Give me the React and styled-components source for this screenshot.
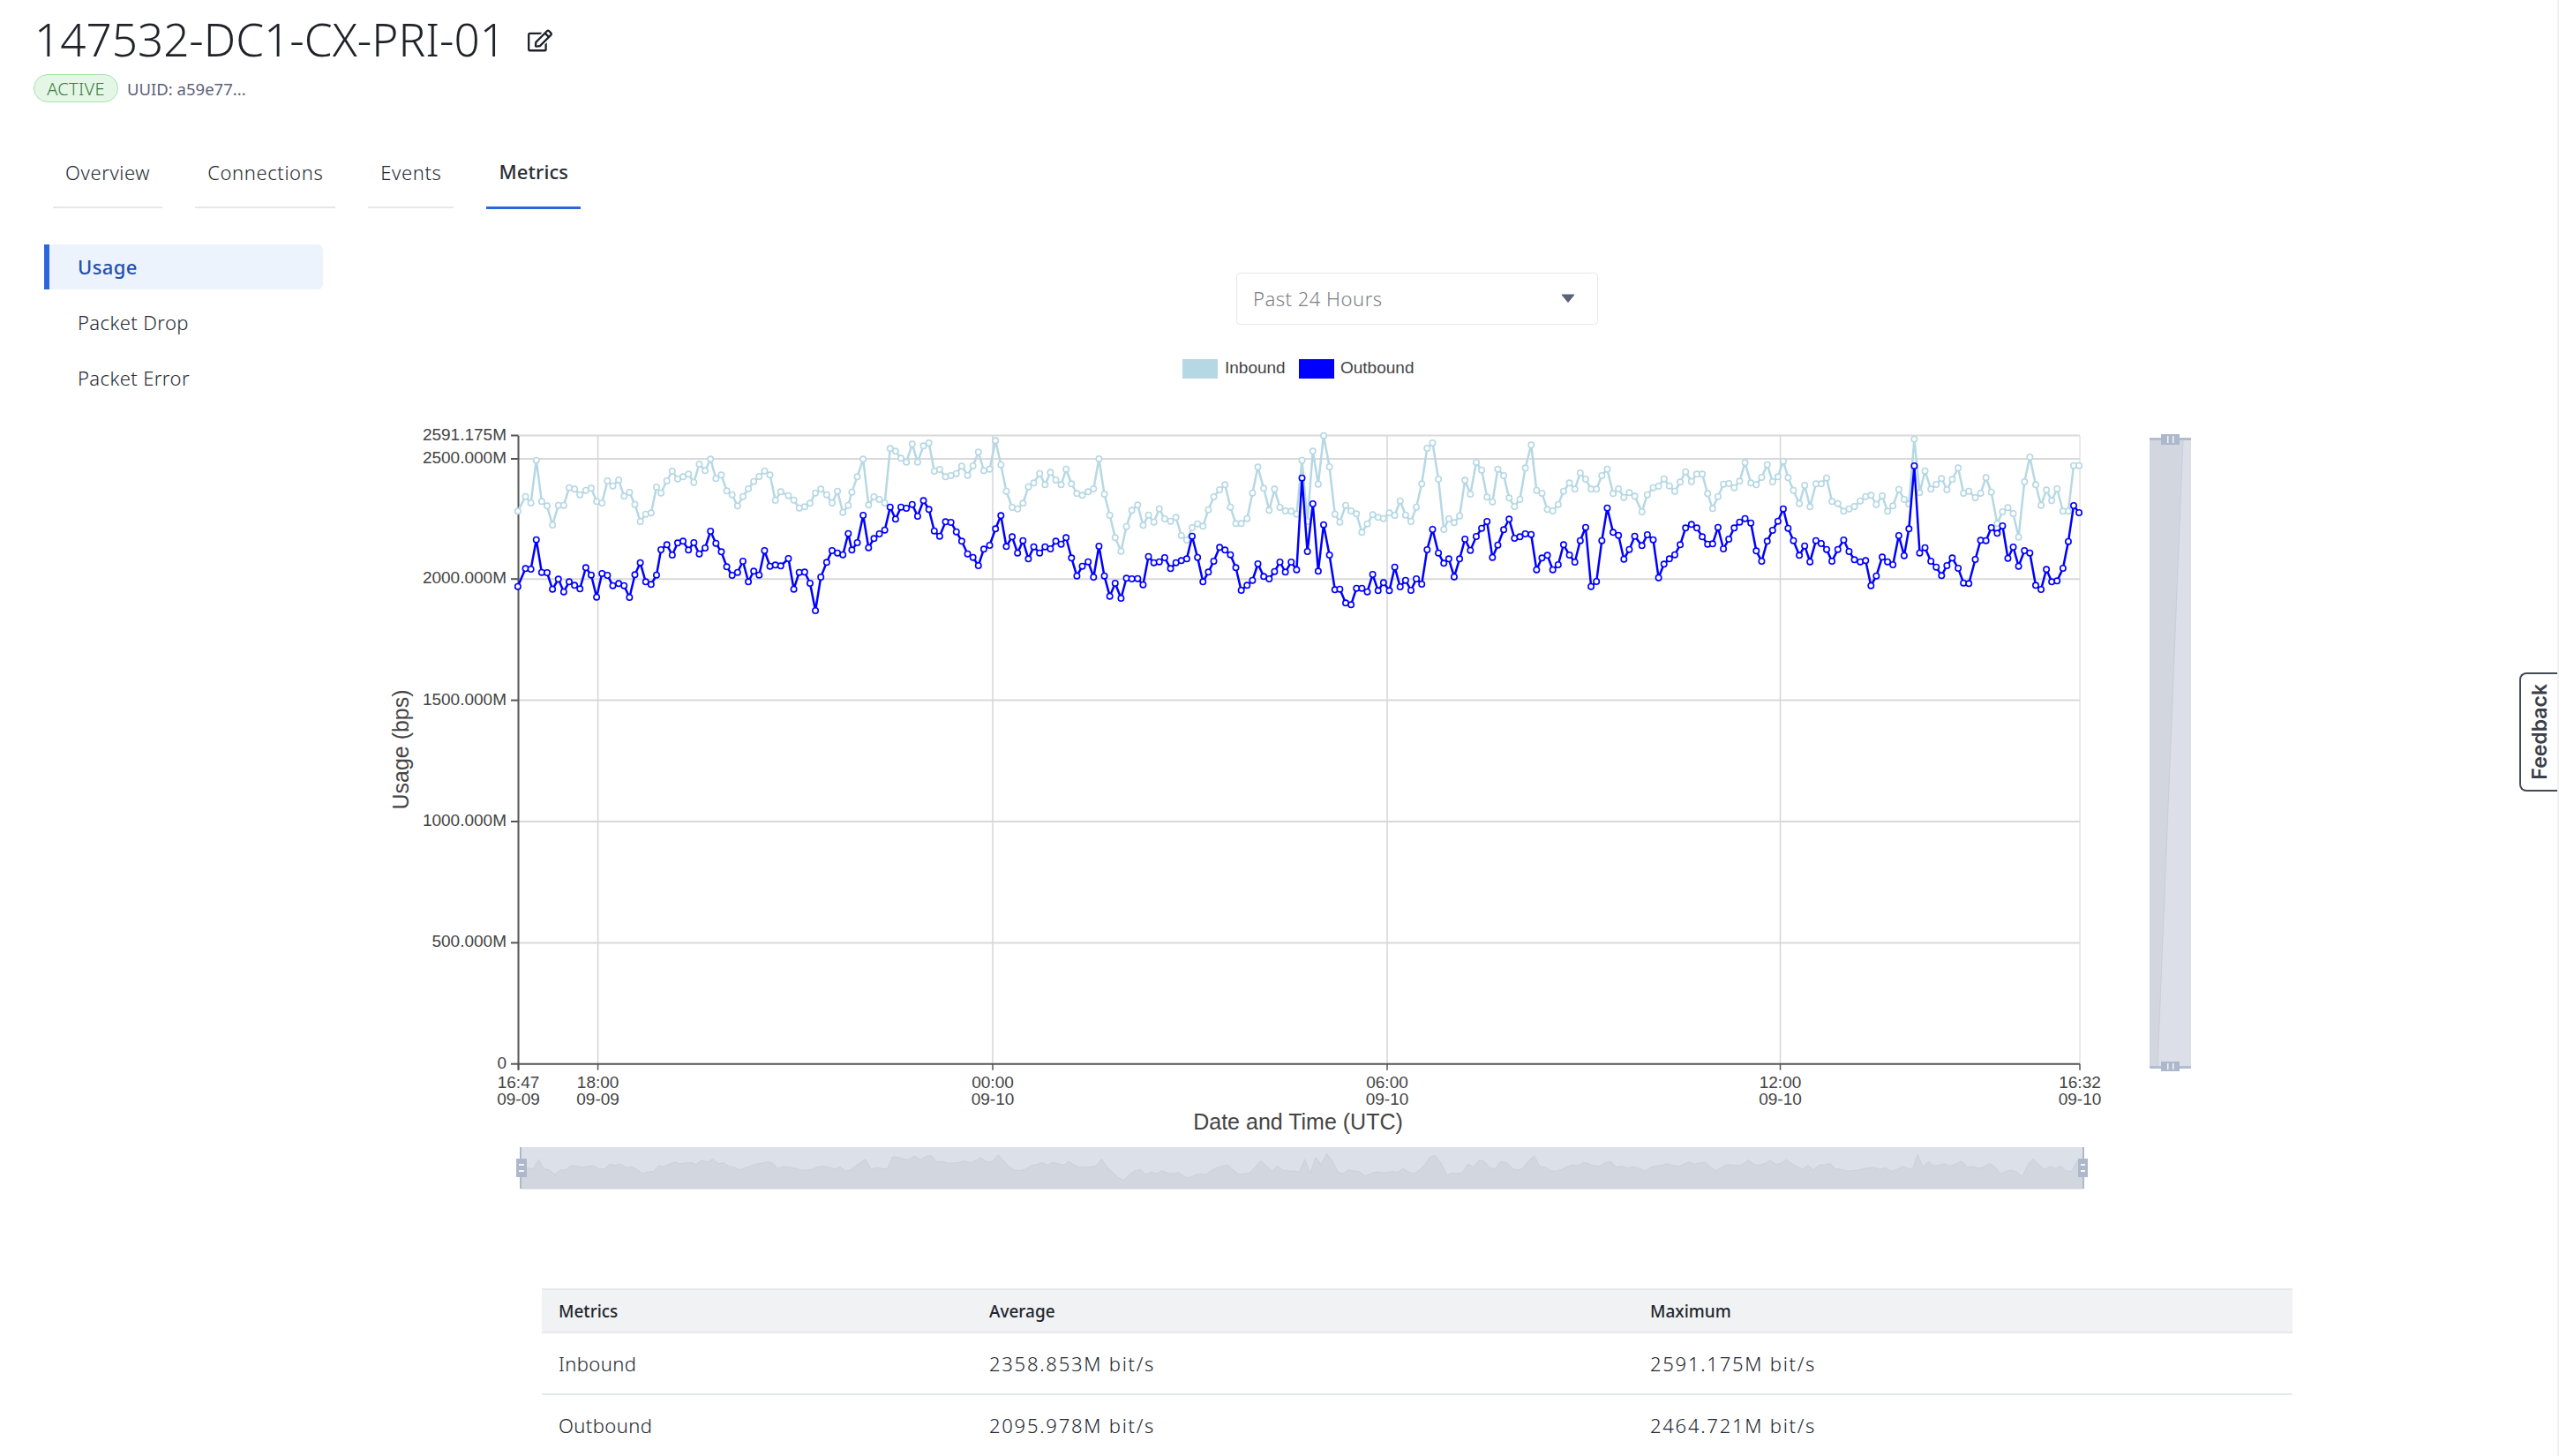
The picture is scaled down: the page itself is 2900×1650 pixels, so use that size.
import React from 'react'
import styled, { createGlobalStyle } from 'styled-components'
import { FaRegEdit } from 'react-icons/fa'

const GlobalStyle = createGlobalStyle`
  html, body {
    margin: 0;
    padding: 0;
    background: #fff;
    height: 1650px;
    overflow: hidden;
  }
  body {
    font-family: "Noto Sans", "Liberation Sans", sans-serif;
    color: #22262e;
  }
`

// traced off the chart, "x:y" pairs per stretch of the time axis
const parse = (x0, sx, y0, s) =>
  s.trim().split(/\s+/).map((p) => {
    const [x, y] = p.split(':').map(Number)
    return [x0 + x / sx, y0 + y / 3]
  })

const inbound = [
  ...parse(420, 1.96, 280, `327:898 344:848 356:870 368:725 380:865 392:880 404:945 417:878 429:878 441:818 453:823 465:842 478:827 490:820 502:865 514:870 526:795 538:812 551:792 563:847 575:834 587:875 599:933 611:908 623:904 635:816 645:836 658:795 670:762 682:788 694:781 706:772 718:800 730:738 743:760 755:721 767:787 779:775 791:829 803:842 815:880 827:848 839:822 851:797 863:780 875:761 887:775 899:861 911:832 928:845 940:860 952:887 964:883 976:871 988:836 1000:823 1013:842 1025:870 1037:830 1049:902 1061:878 1069:833 1081:781 1094:721 1106:877 1118:849 1130:858 1142:870 1154:685 1166:694 1178:718 1190:731 1203:670 1215:731 1228:676 1240:666 1252:762 1264:756 1277:781 1289:777 1301:770 1313:745 1326:776 1338:744 1350:697 1362:760 1375:755 1388:658 1400:740 1412:830 1425:885 1437:890 1449:871 1461:815 1473:802 1486:770 1498:808 1510:766 1522:792`),
  ...parse(1200, 1.96, 280, `5:808 16:755 28:805 40:838 52:844 65:832 77:822 89:720 101:840 113:912 125:988 138:1034 150:950 162:895 175:877 187:946 199:911 211:935 223:890 235:924 248:932 260:919 272:981 284:996 296:954 308:941 320:949 332:893 344:849 357:825 369:808 381:884 393:940 405:940 418:923 430:836 442:748 455:820 467:895 479:823 491:885 503:897 516:898 528:908 540:725 552:933 564:694 576:806 588:641 601:747 613:908 624:935 637:878 649:897 661:907 673:970 685:941 697:910 709:919 721:923 734:904 746:912 758:863 770:911 782:933 794:884 806:805 818:684 830:666 843:789 855:960 866:924 878:937 890:914 902:793 914:840 927:732 939:758 951:850 963:866 975:755 988:777 1000:853 1012:882 1024:858 1036:751 1049:673 1061:827 1073:837 1085:892 1097:897 1109:875 1121:830 1134:802 1146:823 1158:768 1170:789 1182:823 1194:823 1206:777 1218:755 1231:838 1243:822 1255:851 1267:835 1279:847 1295:900 1307:842 1320:818 1332:813 1344:788 1356:812 1368:830 1380:799 1392:764 1405:797 1417:772 1429:772 1441:838 1452:889 1464:848 1476:806 1488:804 1500:818 1512:796 1524:733 1537:802 1549:808 1561:783`),
  ...parse(1950, 1.65, 460, `87:200 97:258 107:241 117:188 126:244 136:287 147:332 157:270 167:343 178:265 188:265 198:245 208:325 219:332 230:358 240:350 250:342 261:323 271:308 281:304 291:335 302:306 312:358 322:340 333:284 343:318 352:334 362:113 372:295 382:221 393:283 403:267 413:247 423:285 433:250 444:211 454:297 464:290 476:312 486:297 496:244 506:293 517:400 527:360 537:346 547:366 557:446 568:258 578:174 589:268 599:338 609:286 619:322 629:282 640:358 650:358 660:203 670:203`),
]

const outbound = [
  ...parse(420, 1.96, 280, `327:1154 344:1093 356:1095 368:995 380:1106 392:1107 404:1163 417:1129 429:1172 441:1138 453:1150 465:1162 478:1090 490:1115 502:1190 514:1110 526:1116 538:1151 551:1144 563:1151 575:1191 587:1114 599:1073 611:1138 623:1147 635:1115 645:1029 658:1012 670:1047 682:1006 694:1000 706:1030 718:1005 730:1043 743:1023 755:966 767:1007 779:1036 791:1087 803:1116 815:1106 827:1068 839:1138 851:1102 863:1115 875:1032 887:1085 899:1081 911:1084 928:1059 940:1163 952:1106 964:1105 976:1143 988:1236 1000:1122 1013:1072 1025:1032 1037:1040 1049:1046 1061:974 1069:1030 1081:1005 1094:912 1106:1022 1118:991 1130:975 1142:962 1154:884 1166:925 1178:884 1190:888 1203:875 1215:915 1228:862 1240:892 1252:965 1264:983 1277:934 1289:936 1301:968 1313:1000 1326:1043 1338:1055 1350:1083 1362:1027 1375:1014 1388:958 1400:913 1412:1018 1425:985 1437:1040 1449:998 1461:1060 1473:1019 1486:1040 1498:1019 1510:1026 1522:1000`),
  ...parse(1200, 1.96, 280, `5:1010 16:988 28:1057 40:1118 52:1085 65:1070 77:1122 89:1017 101:1118 113:1187 125:1143 138:1194 150:1126 162:1128 175:1127 187:1148 199:1052 211:1073 223:1070 235:1056 248:1093 260:1073 272:1066 284:1060 296:983 308:1055 320:1138 332:1105 344:1068 357:1021 369:1030 381:1046 393:1090 405:1167 418:1150 430:1133 442:1077 455:1120 467:1128 479:1103 491:1071 503:1105 516:1071 528:1097 540:785 552:1035 564:873 576:1102 588:944 601:1047 613:1165 624:1163 637:1210 649:1216 661:1160 673:1160 685:1172 697:1113 709:1168 721:1141 734:1168 746:1088 758:1155 770:1133 782:1167 794:1128 806:1146 818:1029 830:960 843:1040 855:1075 866:1060 878:1121 890:1060 902:993 914:1031 927:984 939:956 951:933 963:1055 975:1013 988:961 1000:925 1012:990 1024:985 1036:975 1049:977 1061:1097 1073:1057 1085:1048 1097:1097 1109:1080 1121:1012 1134:1047 1146:1071 1158:998 1170:953 1182:1154 1194:1137 1206:998 1218:887 1231:970 1243:980 1255:1061 1267:1028 1279:983 1295:1015 1307:978 1320:995 1332:1124 1344:1078 1356:1060 1368:1046 1380:1012 1392:955 1405:943 1417:955 1429:985 1441:1010 1452:1009 1464:953 1476:1026 1488:993 1500:955 1512:935 1524:923 1537:938 1549:1033 1561:1068`),
  ...parse(1950, 1.65, 460, `87:460 97:423 107:392 117:350 126:416 136:458 147:508 157:476 167:530 178:458 188:468 198:488 208:528 219:488 230:456 240:495 250:523 261:530 271:526 281:611 291:578 302:514 312:530 322:540 333:441 343:509 352:418 362:204 372:500 382:482 393:528 403:548 413:577 423:543 433:517 444:552 454:602 464:604 476:522 486:457 496:458 506:414 517:433 527:408 537:518 547:480 557:545 568:492 578:500 589:610 599:624 609:556 619:598 629:595 640:552 650:461 660:339 670:363`),
]

const PLOT = { left: 587.5, right: 2357, top: 494, bottom: 1205.7 }

const yTicks = [
  { y: 493.5, label: '2591.175M' },
  { y: 520, label: '2500.000M' },
  { y: 656.2, label: '2000.000M' },
  { y: 793.6, label: '1500.000M' },
  { y: 931, label: '1000.000M' },
  { y: 1068.4, label: '500.000M' },
  { y: 1205.7, label: '0' },
]

const xTicks = [
  { x: 587.5, time: '16:47', date: '09-09' },
  { x: 677.6, time: '18:00', date: '09-09' },
  { x: 1125, time: '00:00', date: '09-10' },
  { x: 1572, time: '06:00', date: '09-10' },
  { x: 2017.5, time: '12:00', date: '09-10' },
  { x: 2357, time: '16:32', date: '09-10' },
]

const toPath = (pts) => pts.map(([x, y]) => `${x.toFixed(1)},${y.toFixed(1)}`).join(' ')

// overview strip under the chart follows the inbound series
const overview = () => {
  const line = inbound.map(([x, y]) => [
    590 + ((x - PLOT.left) * 1771) / (PLOT.right - PLOT.left),
    1314 + (y - 522) * 0.23,
  ])
  return [[590, 1347], ...line, [2361, 1347]]
}

const Page = styled.div`
  width: 2898px;
  min-height: 1650px;
  border-right: 2px solid #f1f1f1;
  position: relative;
  overflow: hidden;
`

const Header = styled.header`
  padding: 10px 0 0 39px;
`

const TitleRow = styled.div`
  display: flex;
  align-items: center;
  gap: 25px;
`

const Title = styled.h1`
  margin: 0;
  font-size: 51.2px;
  line-height: 68px;
  font-weight: 350;
  color: #1f2329;
`

const EditIcon = styled(FaRegEdit)`
  font-size: 28px;
  color: #1f2329;
  margin-top: 4px;
`

const StatusRow = styled.div`
  display: flex;
  align-items: center;
  gap: 10px;
  margin: 6px 0 0 -1px;
`

const Badge = styled.span`
  box-sizing: border-box;
  width: 96px;
  height: 32px;
  display: flex;
  align-items: center;
  justify-content: center;
  border: 1.5px solid #a9e3ad;
  border-radius: 16px;
  background: #e4f7e6;
  color: #3c7a42;
  font-size: 20px;
  font-weight: 350;
  letter-spacing: 0.3px;
`

const Uuid = styled.span`
  font-size: 18.5px;
  color: #5b6179;
`

const Tabs = styled.nav`
  display: flex;
  gap: 37px;
  margin: 64px 0 0 60px;
`

const Tab = styled.div`
  padding: 0 14px 24px;
  height: 30px;
  line-height: 30px;
  font-size: 22px;
  letter-spacing: ${(p) => (p.$active ? '0.1px' : '0.6px')};
  font-weight: ${(p) => (p.$active ? 500 : 350)};
  color: ${(p) => (p.$active ? '#2a2e36' : '#262a32')};
  border-bottom: ${(p) => (p.$active ? '3px solid #2b66dd' : '2px solid #e6e7ea')};
  margin-bottom: ${(p) => (p.$active ? '0' : '1px')};
  margin-top: ${(p) => (p.$active ? '-1px' : '0')};
  padding-bottom: ${(p) => (p.$active ? '25px' : '24px')};
`

const Body = styled.div`
  display: flex;
  margin: 40px 0 0 50px;
`

const SideNav = styled.aside`
  width: 316px;
  margin-right: 54px;
  flex: none;
  display: flex;
  flex-direction: column;
  gap: 12px;
`

const SideItem = styled.div`
  box-sizing: border-box;
  height: 51px;
  line-height: 51px;
  padding-left: ${(p) => (p.$active ? '32px' : '38px')};
  font-size: 22px;
  letter-spacing: 0.4px;
  color: ${(p) => (p.$active ? '#2351ac' : '#262a32')};
  font-weight: ${(p) => (p.$active ? 500 : 350)};
  background: ${(p) => (p.$active ? '#edf3fd' : 'transparent')};
  border-left: ${(p) => (p.$active ? '6px solid #2b66dd' : 'none')};
  border-radius: ${(p) => (p.$active ? '0 6px 6px 0' : '0')};
`

const Main = styled.main`
  width: 2372px;
  flex: none;
  padding-top: 32px;
  display: flex;
  flex-direction: column;
  align-items: center;
`

const Select = styled.div`
  box-sizing: border-box;
  width: 410px;
  height: 59px;
  display: flex;
  align-items: center;
  justify-content: space-between;
  padding: 0 25px 2px 18px;
  border: 1.5px solid #e6e7ea;
  border-radius: 4px;
  font-size: 22px;
  font-weight: 350;
  letter-spacing: 0.5px;
  color: #7c7f86;
`

const ChartSvg = styled.svg`
  display: block;
  width: 2372px;
  height: 960px;
  margin-top: 22px;
  font-family: "Liberation Sans", Arial, sans-serif;
  text {
    fill: #444;
  }
`

const MetricsTable = styled.table`
  width: 1984px;
  margin-top: 110px;
  border-collapse: collapse;
  table-layout: fixed;
  font-size: 22px;
  font-weight: 350;
  color: #22262e;
  th {
    height: 47px;
    padding: 0 0 0 19px;
    text-align: left;
    font-size: 19px;
    font-weight: 500;
    color: #22262e;
    background: #f1f2f4;
    border-top: 2px solid #e6e8eb;
    border-bottom: 2px solid #e6e8eb;
  }
  td {
    height: 68px;
    padding: 0 0 0 19px;
    letter-spacing: 0.4px;
  }
  tbody tr:first-child td {
    border-bottom: 2px solid #e6e8eb;
  }
`

const NumberCell = styled.td`
  && {
    letter-spacing: 1.75px;
  }
`

const FeedbackTab = styled.div`
  position: absolute;
  right: 0;
  top: 762px;
  box-sizing: border-box;
  width: 43px;
  height: 135px;
  display: flex;
  align-items: center;
  justify-content: center;
  background: #fff;
  border: 2px solid #444b57;
  border-right: none;
  border-radius: 8px 0 0 8px;
  span {
    writing-mode: vertical-rl;
    transform: rotate(180deg);
    font-family: Inter, "Liberation Sans", sans-serif;
    font-weight: 600;
    font-size: 23px;
    color: #3b4049;
  }
`

function SliderHandle({ x, y, w, h, bars }) {
  return (
    <g>
      <rect x={x} y={y} width={w} height={h} fill="#aeb8cc" />
      {bars.map((b) => (
        <rect key={`${b.x}-${b.y}`} x={b.x} y={b.y} width={b.w} height={b.h} fill="#fff" opacity="0.85" />
      ))}
    </g>
  )
}

function UsageChart() {
  return (
    <ChartSvg viewBox="420 390 2372 960">
      {/* legend */}
      <rect x="1340" y="407" width="40" height="22" fill="#b6d8e4" />
      <text x="1388" y="423" fontSize="19">Inbound</text>
      <rect x="1472" y="407" width="40" height="22" fill="#0000ff" />
      <text x="1519" y="423" fontSize="19">Outbound</text>

      {/* grid */}
      {yTicks.slice(0, -1).map((t) => (
        <line key={t.label} x1={PLOT.left} x2={PLOT.right} y1={t.y} y2={t.y} stroke="#d9d9d9" strokeWidth="2" />
      ))}
      {xTicks.slice(1).map((t) => (
        <line
          key={t.time}
          x1={t.x}
          x2={t.x}
          y1={PLOT.top}
          y2={PLOT.bottom}
          stroke="#d6d6d6"
          strokeWidth={t.x === PLOT.right ? 1 : 1.5}
        />
      ))}

      {/* axes */}
      <line x1={PLOT.left} x2={PLOT.left} y1={PLOT.top} y2={PLOT.bottom + 7} stroke="#555" strokeWidth="2" />
      <line x1={PLOT.left} x2={PLOT.right} y1={PLOT.bottom} y2={PLOT.bottom} stroke="#555" strokeWidth="2" />
      {yTicks.map((t) => (
        <g key={t.label}>
          <line x1="579" x2={PLOT.left} y1={t.y} y2={t.y} stroke="#555" strokeWidth="2" />
          <text x="574" y={t.y + 5} fontSize="19" textAnchor="end">{t.label}</text>
        </g>
      ))}
      {xTicks.map((t) => (
        <g key={t.time}>
          <line x1={t.x} x2={t.x} y1={PLOT.bottom} y2={PLOT.bottom + 7} stroke="#555" strokeWidth="1.5" />
          <text x={t.x} y="1233" fontSize="19" textAnchor="middle">{t.time}</text>
          <text x={t.x} y="1252" fontSize="19" textAnchor="middle">{t.date}</text>
        </g>
      ))}
      <text x="1471" y="1280" fontSize="25" textAnchor="middle">Date and Time (UTC)</text>
      <text transform="translate(462.5 849.5) rotate(-90)" fontSize="25" textAnchor="middle">Usage (bps)</text>

      {/* series */}
      <polyline points={toPath(inbound)} fill="none" stroke="#b6d8e4" strokeWidth="2.5" />
      {inbound.map(([x, y]) => (
        <circle key={x} cx={x} cy={y} r="3.2" fill="#fff" stroke="#b6d8e4" strokeWidth="1.6" />
      ))}
      <polyline points={toPath(outbound)} fill="none" stroke="#0000ff" strokeWidth="2.5" />
      {outbound.map(([x, y]) => (
        <circle key={x} cx={x} cy={y} r="3.2" fill="#fff" stroke="#0000ff" strokeWidth="1.6" />
      ))}

      {/* vertical range slider */}
      <rect x="2436" y="497" width="47" height="713" fill="#dcdfe8" />
      <polygon points="2436,497 2474,497 2445,1210 2436,1210" fill="#d1d6df" />
      <line x1="2474" y1="497" x2="2445" y2="1210" stroke="#c8cdd8" />
      <rect x="2436" y="496" width="47" height="3" fill="#b4bdcf" />
      <rect x="2436" y="1208" width="47" height="3" fill="#b4bdcf" />
      <SliderHandle
        x={2449}
        y={492}
        w={21}
        h={12}
        bars={[{ x: 2456, y: 494, w: 1.5, h: 8 }, { x: 2462, y: 494, w: 1.5, h: 8 }]}
      />
      <SliderHandle
        x={2449}
        y={1203}
        w={21}
        h={11}
        bars={[{ x: 2456, y: 1205, w: 1.5, h: 7 }, { x: 2462, y: 1205, w: 1.5, h: 7 }]}
      />

      {/* overview strip */}
      <rect x="590" y="1300" width="1771" height="47" fill="#dce0e9" />
      <polygon points={toPath(overview())} fill="#d1d6df" stroke="#cbd0da" />
      <rect x="589" y="1300" width="2" height="47" fill="#aeb8cc" />
      <rect x="2360" y="1300" width="2" height="47" fill="#aeb8cc" />
      <SliderHandle
        x={585}
        y={1313}
        w={12}
        h={21}
        bars={[{ x: 588, y: 1319, w: 6, h: 2 }, { x: 588, y: 1326, w: 6, h: 2 }]}
      />
      <SliderHandle
        x={2355}
        y={1313}
        w={11}
        h={21}
        bars={[{ x: 2358, y: 1319, w: 5, h: 2 }, { x: 2358, y: 1326, w: 5, h: 2 }]}
      />
    </ChartSvg>
  )
}

export default function App() {
  return (
    <>
      <GlobalStyle />
      <Page>
        <Header>
          <TitleRow>
            <Title>147532-DC1-CX-PRI-01</Title>
            <EditIcon />
          </TitleRow>
          <StatusRow>
            <Badge>ACTIVE</Badge>
            <Uuid>UUID: a59e77...</Uuid>
          </StatusRow>
        </Header>

        <Tabs>
          <Tab>Overview</Tab>
          <Tab>Connections</Tab>
          <Tab>Events</Tab>
          <Tab $active>Metrics</Tab>
        </Tabs>

        <Body>
          <SideNav>
            <SideItem $active>Usage</SideItem>
            <SideItem>Packet Drop</SideItem>
            <SideItem>Packet Error</SideItem>
          </SideNav>

          <Main>
            <Select>
              Past 24 Hours
              <svg width="16" height="10" viewBox="0 0 16 10">
                <path d="M1 1h14l-7 8.5z" fill="#5b6179" stroke="#5b6179" strokeLinejoin="round" />
              </svg>
            </Select>

            <UsageChart />

            <MetricsTable>
              <colgroup>
                <col style={{ width: 488 }} />
                <col style={{ width: 749 }} />
                <col style={{ width: 747 }} />
              </colgroup>
              <thead>
                <tr>
                  <th>Metrics</th>
                  <th>Average</th>
                  <th>Maximum</th>
                </tr>
              </thead>
              <tbody>
                <tr>
                  <td>Inbound</td>
                  <NumberCell>2358.853M bit/s</NumberCell>
                  <NumberCell>2591.175M bit/s</NumberCell>
                </tr>
                <tr>
                  <td>Outbound</td>
                  <NumberCell>2095.978M bit/s</NumberCell>
                  <NumberCell>2464.721M bit/s</NumberCell>
                </tr>
              </tbody>
            </MetricsTable>
          </Main>
        </Body>

        <FeedbackTab>
          <span>Feedback</span>
        </FeedbackTab>
      </Page>
    </>
  )
}
